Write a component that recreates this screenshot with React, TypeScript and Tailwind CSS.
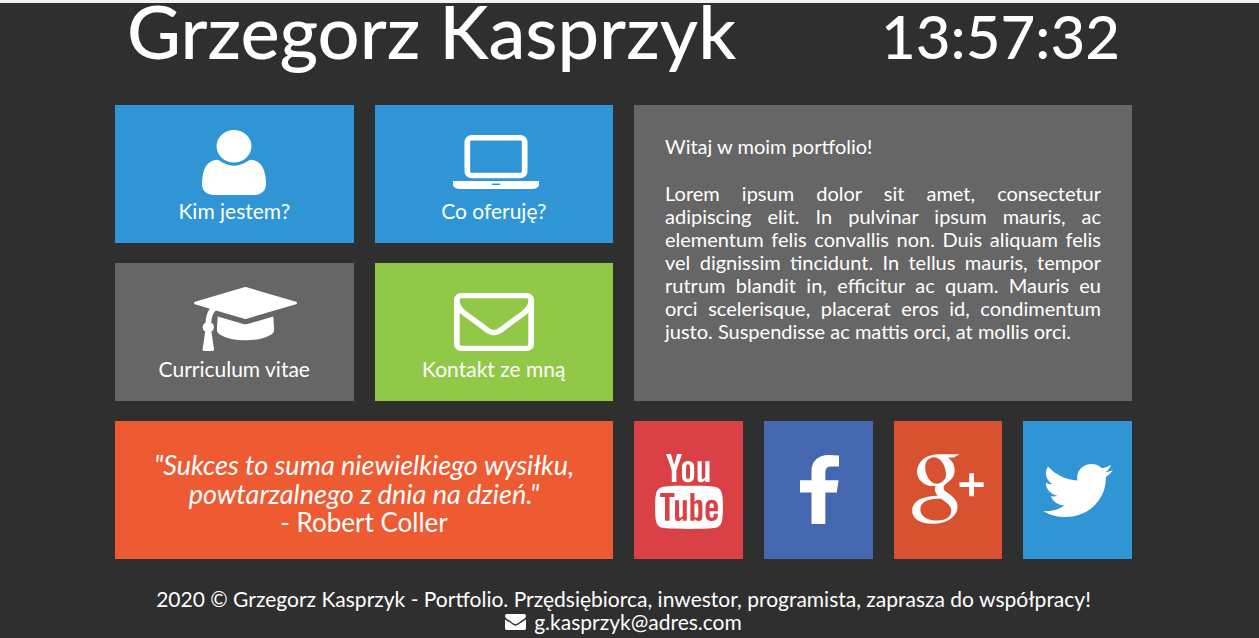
import type { ReactNode } from "react";
import { TfiYoutube } from "react-icons/tfi";
import { TiSocialGooglePlus } from "react-icons/ti";

type GlyphProps = { viewBox: string; d: string; className: string };

function Glyph({ viewBox, d, className }: GlyphProps) {
  return (
    <svg viewBox={viewBox} preserveAspectRatio="none" fill="currentColor" aria-hidden="true" className={className}>
      <path d={d} />
    </svg>
  );
}

const USER =
  "M1600 1405q0 120-73 189.5t-194 69.5h-874q-121 0-194-69.5t-73-189.5q0-53 3.5-103.5t14-109 26.5-108.5 43-97.5 62-81 85.5-53.5 111.5-20q9 0 42 21.5t74.5 48 108 48 133.5 21.5 133.5-21.5 108-48 74.5-48 42-21.5q61 0 111.5 20t85.5 53.5 62 81 43 97.5 26.5 108.5 14 109 3.5 103.5zm-320-893q0 159-112.5 271.5t-271.5 112.5-271.5-112.5-112.5-271.5 112.5-271.5 271.5-112.5 271.5 112.5 112.5 271.5z";
const LAPTOP =
  "M416 1152q-66 0-113-47t-47-113v-704q0-66 47-113t113-47h1088q66 0 113 47t47 113v704q0 66-47 113t-113 47h-1088zm-32-864v704q0 13 9.5 22.5t22.5 9.5h1088q13 0 22.5-9.5t9.5-22.5v-704q0-13-9.5-22.5t-22.5-9.5h-1088q-13 0-22.5 9.5t-9.5 22.5zm1376 928h160v96q0 40-47 68t-113 28h-1600q-66 0-113-28t-47-68v-96h1760zm-720 96q16 0 16-16t-16-16h-160q-16 0-16 16t16 16h160z";
const CAP =
  "M1774 836l18 316q4 69-82 128t-235 93.5-323 34.5-323-34.5-235-93.5-82-128l18-316 574 181q22 7 48 7t48-7zm530-324q0 23-22 31l-1120 352q-4 1-10 1t-10-1l-652-206q-43 34-71 111.5t-34 178.5q63 36 63 109 0 69-58 107l58 433q2 14-8 25-9 11-24 11h-192q-15 0-24-11-10-11-8-25l58-433q-58-38-58-107 0-73 65-111 11-207 98-330l-333-104q-22-8-22-31t22-31l1120-352q4-1 10-1t10 1l1120 352q22 8 22 31z";
const MAIL_OUTLINE =
  "M1664 1504v-768q-32 36-69 66-268 206-426 338-51 43-83 67t-86.5 48.5-102.5 24.5h-2q-48 0-102.5-24.5t-86.5-48.5-83-67q-158-132-426-338-37-30-69-66v768q0 13 9.5 22.5t22.5 9.5h1472q13 0 22.5-9.5t9.5-22.5zm0-1051v-24.5l-.5-13-3-12.5-5.5-9-9-7.5-14-2.5h-1472q-13 0-22.5 9.5t-9.5 22.5q0 168 147 284 193 152 401 317 6 5 35 29.5t46 37.5 44.5 31.5 50.5 27.5 43 9h2q20 0 43-9t50.5-27.5 44.5-31.5 46-37.5 35-29.5q208-165 401-317 54-43 100.5-115.5t46.5-131.5zm128-37v1088q0 66-47 113t-113 47h-1472q-66 0-113-47t-47-113v-1088q0-66 47-113t113-47h1472q66 0 113 47t47 113z";
const MAIL_SOLID =
  "M1792 710v794q0 66-47 113t-113 47h-1472q-66 0-113-47t-47-113v-794q44 49 101 87 362 246 497 345 57 42 92.5 65.5t94.5 48 110 24.5h2q51 0 110-24.5t94.5-48 92.5-65.5q170-123 498-345 57-39 100-87zm0-294q0 79-49 151t-122 123q-376 261-468 325-10 7-42.5 31t-54 38.5-52 32.5-57.5 27-50 9h-2q-23 0-50-9t-57.5-27-52-32.5-54-38.5-42.5-31q-91-64-262-182.5t-205-142.5q-62-42-117-115.5t-55-136.5q0-78 41.5-130t118.5-52h1472q65 0 112.5 47t47.5 113z";
const FACEBOOK =
  "M1343 12v264h-157q-86 0-116 36t-30 108v189h293l-39 296h-254v759h-306v-759h-255v-296h255v-218q0-186 104-288.5t277-102.5q147 0 228 12z";
const TWITTER =
  "M1684 408q-67 98-162 167 1 14 1 42 0 130-38 259.5t-115.5 248.5-184.5 210.5-258 146-323 54.5q-271 0-496-145 35 4 78 4 225 0 401-138-105-2-188-64.5t-114-159.5q33 5 61 5 43 0 85-11-112-23-185.5-111.5t-73.5-205.5v-4q68 38 146 41-66-44-105-115t-39-154q0-88 44-163 121 149 294.5 238.5t371.5 99.5q-8-38-8-74 0-134 94.5-228.5t228.5-94.5q140 0 236 102 109-21 205-78-37 115-142 178 93-10 186-50z";

function MenuTile({ label, color, children }: { label: string; color: string; children: ReactNode }) {
  return (
    <a href="#" className={`col-span-2 flex h-[138px] flex-col items-center justify-end pb-5 ${color}`}>
      {children}
      <span className="text-[21px] leading-6">{label}</span>
    </a>
  );
}

function SocialTile({ name, color, children }: { name: string; color: string; children: ReactNode }) {
  return (
    <a href="#" aria-label={name} className={`flex h-[138px] items-center justify-center overflow-hidden ${color}`}>
      {children}
    </a>
  );
}

export default function App() {
  return (
    <div className="min-h-screen border-t-[3px] border-[#f2f2f2] bg-[#2f2f2f] pr-3 font-['Lato','Open_Sans',sans-serif] text-white">
      <div className="mx-auto w-full max-w-[1017px]">
        <header className="flex items-baseline justify-between px-3 pb-[41px] leading-[56px] font-medium">
          <h1 className="text-[74px]">Grzegorz Kasprzyk</h1>
          <time className="text-[60px]">13:57:32</time>
        </header>

        <main className="grid grid-cols-8 gap-x-[21px] gap-y-5">
          <MenuTile label="Kim jestem?" color="bg-[#3095d4]">
            <Glyph viewBox="192 128 1408 1536" d={USER} className="mb-1 h-[65px] w-16" />
          </MenuTile>
          <MenuTile label="Co oferuję?" color="bg-[#3095d4]">
            <Glyph viewBox="0 128 1920 1280" d={LAPTOP} className="mb-[10px] ml-1 h-[54px] w-[86px]" />
          </MenuTile>

          <section className="col-span-4 row-span-2 bg-[#666666] px-[31px] pt-[30px] text-xl leading-[23px]">
            <p>Witaj w moim portfolio!</p>
            <p className="mt-6 text-justify">
              Lorem ipsum dolor sit amet, consectetur adipiscing elit. In pulvinar ipsum mauris, ac elementum felis
              convallis non. Duis aliquam felis vel dignissim tincidunt. In tellus mauris, tempor rutrum blandit in,
              efficitur ac quam. Mauris eu orci scelerisque, placerat eros id, condimentum justo. Suspendisse ac mattis
              orci, at mollis orci.
            </p>
          </section>

          <MenuTile label="Curriculum vitae" color="bg-[#666666]">
            <Glyph viewBox="0 128 2304 1536" d={CAP} className="mb-[6px] ml-[22px] h-16 w-[103px]" />
          </MenuTile>
          <MenuTile label="Kontakt ze mną" color="bg-[#92c847]">
            <Glyph viewBox="0 256 1792 1408" d={MAIL_OUTLINE} className="mb-[6px] h-[58px] w-20" />
          </MenuTile>

          <blockquote className="col-span-4 flex flex-col items-center justify-center bg-[#ee5a32] px-8 pt-[6px] text-center leading-[29px]">
            <p className="text-[27px] italic">"Sukces to suma niewielkiego wysiłku, powtarzalnego z dnia na dzień."</p>
            <p className="text-[26px]">- Robert Coller</p>
          </blockquote>

          <SocialTile name="YouTube" color="bg-[#da4146]">
            <TfiYoutube preserveAspectRatio="none" className="mt-[2px] ml-[2px] h-[75px] w-[82px]" />
          </SocialTile>
          <SocialTile name="Facebook" color="bg-[#4467b0]">
            <Glyph viewBox="479 0 864 1664" d={FACEBOOK} className="mb-[2px] ml-[2px] h-[69px] w-[39px]" />
          </SocialTile>
          <SocialTile name="Google+" color="bg-[#d85231]">
            <TiSocialGooglePlus preserveAspectRatio="none" className="mr-[6px] mb-[6px] h-[112px] w-[116px] shrink-0" />
          </SocialTile>
          <SocialTile name="Twitter" color="bg-[#3095d4]">
            <Glyph viewBox="108 256 1576 1280" d={TWITTER} className="h-[53px] w-[70px]" />
          </SocialTile>
        </main>

        <footer className="pt-7 text-center text-[21px] leading-[23px]">
          <p>2020 © Grzegorz Kasprzyk - Portfolio. Przędsiębiorca, inwestor, programista, zaprasza do współpracy!</p>
          <a href="mailto:g.kasprzyk@adres.com" className="flex items-center justify-center gap-2">
            <Glyph viewBox="0 256 1792 1408" d={MAIL_SOLID} className="h-4 w-[21px]" />
            g.kasprzyk@adres.com
          </a>
        </footer>
      </div>
    </div>
  );
}
